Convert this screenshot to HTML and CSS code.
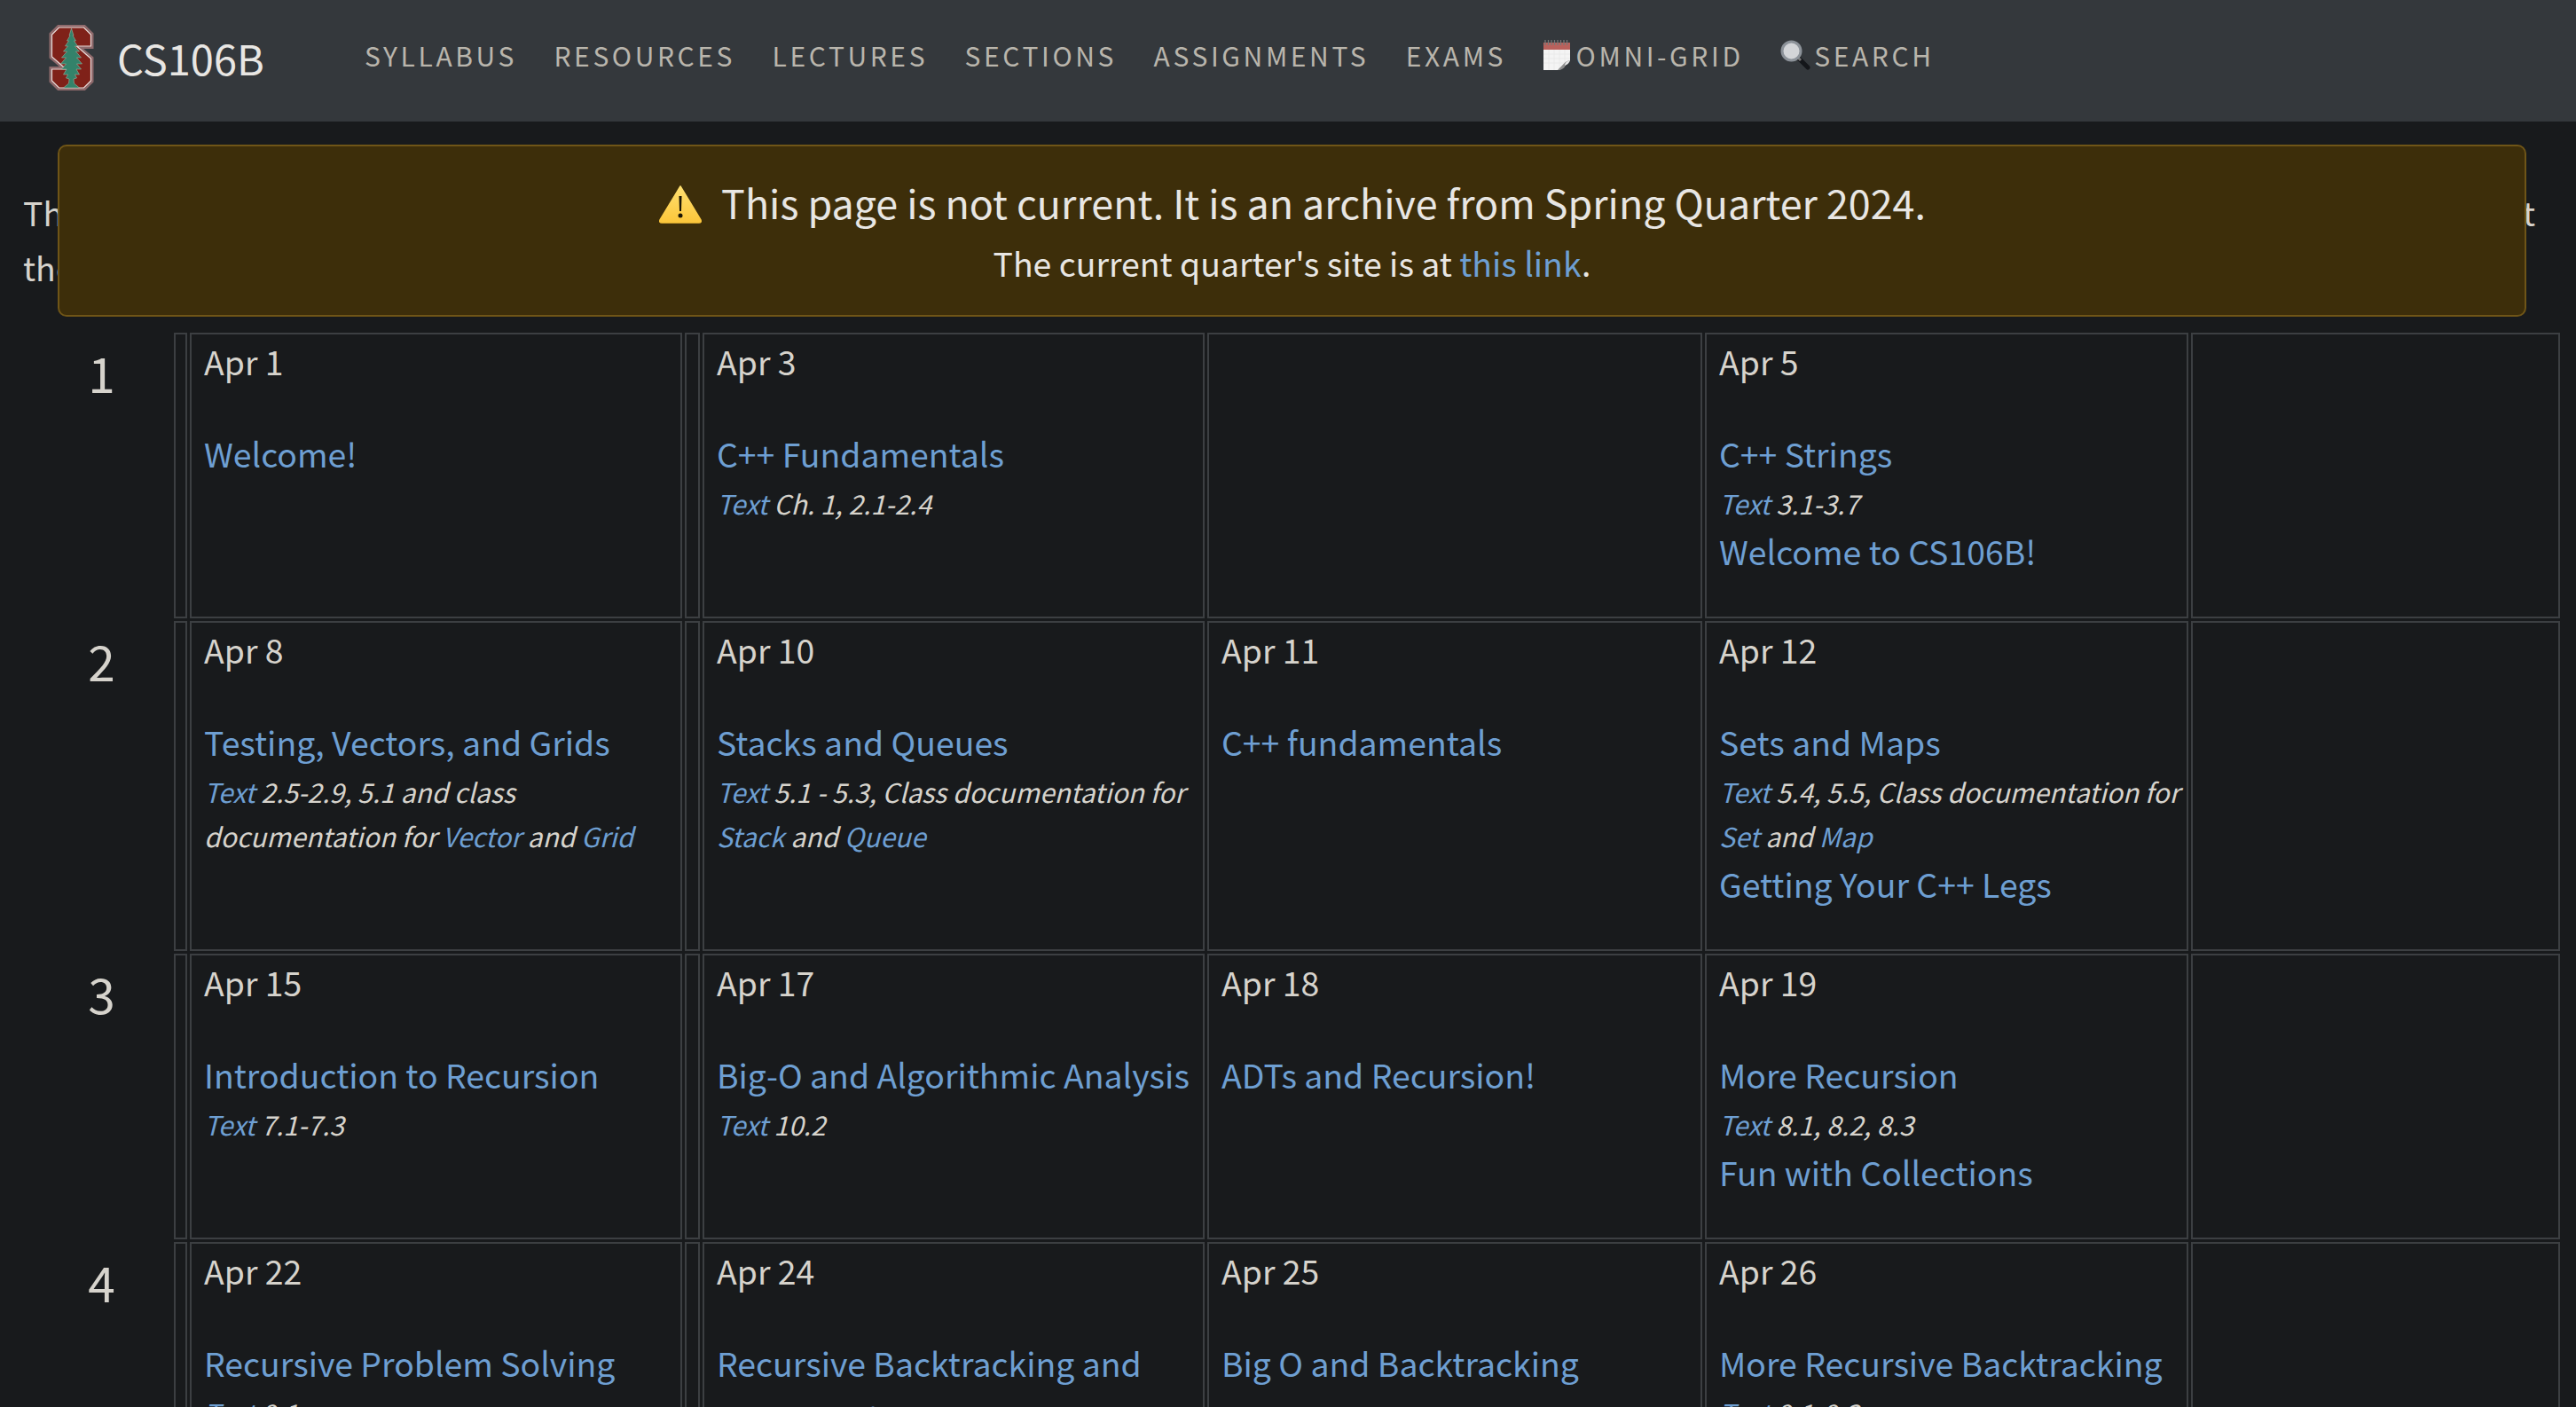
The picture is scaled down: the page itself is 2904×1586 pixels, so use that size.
FILE: index.html
```html
<!DOCTYPE html>
<html lang="en">
<head>
<meta charset="utf-8">
<title>CS106B Schedule</title>
<link rel="stylesheet" href="styles.css">
</head>
<body>
<nav class="navbar">
  <a class="brand" href="#">
    <svg class="logo" viewBox="0 0 50 74" aria-hidden="true">
      <path d="M10 1H40L49 10V26H36L49 37V64L40 73H10L1 64V48H14L1 37V10Z" fill="#8b5a5c" stroke="#8e6a6c" stroke-width="2"/>
      <path d="M11 3H39L47 11V24H31L47 38V63L39 71H11L3 63V50H19L3 36V11Z" fill="#7f2119" stroke="#e9dedc" stroke-width="1.2"/>
      <path d="M25 4L27.500 12H26.500L30 18H28L32 24H29L34 30H30L36 37H31L37 44H31L36 50H30.500L34 56H29L31 60L27.500 61L28 66L34 71H16L22 66L22.500 61L19 60L21 56H16L19.500 50H14L19 44H13L19 37H14L20 30H16L21 24H18L22 18H20L23.500 12H22.500Z" fill="#33826a" stroke="#a9c2b3" stroke-width=".5"/>
    </svg>
    <span class="brand-name">CS106B</span>
  </a>
  <ul class="nav-list">
    <li><a href="#">Syllabus</a></li>
    <li><a href="#">Resources</a></li>
    <li><a href="#">Lectures</a></li>
    <li><a href="#">Sections</a></li>
    <li><a href="#">Assignments</a></li>
    <li><a href="#">Exams</a></li>
    <li><a href="#" class="with-icon">
      <svg class="nav-icon" viewBox="0 0 30 34" aria-hidden="true">
        <rect y="3" width="30" height="31" fill="#f4f4f4"/>
        <rect y="3" width="30" height="8" fill="#b9615c"/>
        <path d="M2 0V6M5.500 0V6M9 0V6M12.500 0V6M16 0V6M19.500 0V6M23 0V6M26.500 0V6" stroke="#777" stroke-width="1.300"/>
        <path d="M0 16H30M0 21H30M0 26H30M6 11V34M12 11V34M18 11V34M24 11V34" stroke="#e4e4e4" stroke-width=".6"/>
        <path d="M30 23L18 34H30Z" fill="#34383c"/>
        <path d="M30 23C24 24 22 28 16 34C20 34 24 32 25 28C27 27 29 25 30 23Z" fill="#8d8d8d"/>
        <path d="M30 23C26 24 24 26 24 29C27 28 29 26 30 23Z" fill="#e8e8e8"/>
      </svg>Omni-Grid</a></li>
    <li><a href="#" class="with-icon">
      <svg class="nav-icon nav-icon-search" viewBox="0 0 34 34" aria-hidden="true">
        <path d="M21 21L31 31" stroke="#14161a" stroke-width="5" stroke-linecap="round"/>
        <path d="M19 19L23 23" stroke="#777" stroke-width="3"/>
        <circle cx="12.500" cy="12.500" r="10.500" fill="#d3d5d8" stroke="#8c9299" stroke-width="3"/>
      </svg>Search</a></li>
  </ul>
</nav>

<main class="page">
  <div class="archive-alert">
    <p class="alert-title">
      <svg class="alert-icon" viewBox="0 0 50 44" aria-hidden="true">
        <defs><linearGradient id="warn" x1="0" y1="0" x2="0" y2="1"><stop offset="0" stop-color="#ffe070"/><stop offset="1" stop-color="#fcc63a"/></linearGradient></defs>
        <path d="M25 2L48 40Q49 43 46 43H4Q1 43 2 40Z" fill="url(#warn)" stroke="url(#warn)" stroke-linejoin="round" stroke-width="1.500"/>
        <path d="M23.500 13H26.500L26 30H24Z" fill="#1b1505"/>
        <circle cx="25" cy="35" r="2.500" fill="#1b1505"/>
      </svg>This page is not current. It is an archive from Spring Quarter 2024.</p>
    <p class="alert-sub">The current quarter's site is at <a href="#">this link</a>.</p>
  </div>

  <p class="intro"><span class="intro-line">This calendar gives the schedule for the quarter. Lecture topics and readings may shift a little as we go along, so check back often to see what to expect</span> the next week.</p>

  <table class="calendar">
    <colgroup>
      <col class="c-week"><col class="c-gap-a"><col class="c-mon"><col class="c-gap-b"><col class="c-wed"><col class="c-thu"><col class="c-fri"><col class="c-sat">
    </colgroup>
    <tbody>
      <tr>
        <th class="week">1</th><td></td>
        <td><div class="date">Apr 1</div><a class="topic" href="#">Welcome!</a></td><td></td>
        <td><div class="date">Apr 3</div><a class="topic" href="#">C++ Fundamentals</a><div class="reading"><a href="#">Text</a> Ch. 1, 2.1-2.4</div></td>
        <td></td>
        <td><div class="date">Apr 5</div><a class="topic" href="#">C++ Strings</a><div class="reading"><a href="#">Text</a> 3.1-3.7</div><a class="topic" href="#">Welcome to CS106B!</a></td>
        <td></td>
      </tr>
      <tr>
        <th class="week">2</th><td></td>
        <td><div class="date">Apr 8</div><a class="topic" href="#">Testing, Vectors, and Grids</a><div class="reading"><a href="#">Text</a> 2.5-2.9, 5.1 and class documentation for <a href="#">Vector</a> and <a href="#">Grid</a></div></td><td></td>
        <td><div class="date">Apr 10</div><a class="topic" href="#">Stacks and Queues</a><div class="reading"><a href="#">Text</a> 5.1 - 5.3, Class documentation for <a href="#">Stack</a> and <a href="#">Queue</a></div></td>
        <td><div class="date">Apr 11</div><a class="topic" href="#">C++ fundamentals</a></td>
        <td><div class="date">Apr 12</div><a class="topic" href="#">Sets and Maps</a><div class="reading"><a href="#">Text</a> 5.4, 5.5, Class documentation for <a href="#">Set</a> and <a href="#">Map</a></div><a class="topic" href="#">Getting Your C++ Legs</a></td>
        <td></td>
      </tr>
      <tr>
        <th class="week">3</th><td></td>
        <td><div class="date">Apr 15</div><a class="topic" href="#">Introduction to Recursion</a><div class="reading"><a href="#">Text</a> 7.1-7.3</div></td><td></td>
        <td><div class="date">Apr 17</div><a class="topic" href="#">Big-O and Algorithmic Analysis</a><div class="reading"><a href="#">Text</a> 10.2</div></td>
        <td><div class="date">Apr 18</div><a class="topic" href="#">ADTs and Recursion!</a></td>
        <td><div class="date">Apr 19</div><a class="topic" href="#">More Recursion</a><div class="reading"><a href="#">Text</a> 8.1, 8.2, 8.3</div><a class="topic" href="#">Fun with Collections</a></td>
        <td></td>
      </tr>
      <tr>
        <th class="week">4</th><td></td>
        <td><div class="date">Apr 22</div><a class="topic" href="#">Recursive Problem Solving</a><div class="reading"><a href="#">Text</a> 9.1</div></td><td></td>
        <td><div class="date">Apr 24</div><a class="topic" href="#">Recursive Backtracking and Enumeration</a></td>
        <td><div class="date">Apr 25</div><a class="topic" href="#">Big O and Backtracking</a></td>
        <td><div class="date">Apr 26</div><a class="topic" href="#">More Recursive Backtracking</a><div class="reading"><a href="#">Text</a> 9.1-9.3</div></td>
        <td></td>
      </tr>
    </tbody>
  </table>
</main>
</body>
</html>
```

FILE: styles.css
```css
* { box-sizing: border-box; }

html, body {
  margin: 0;
  height: 1586px;
  overflow: hidden;
}

body {
  background: #181a1c;
  color: #d6d3cc;
  font-family: "Noto Sans CJK SC", "Source Sans Pro", "Noto Sans", sans-serif;
  font-size: 37.400px;
  line-height: 62px;
}

a { color: #6e9fd2; text-decoration: none; }

/* Navbar */
.navbar {
  display: flex;
  align-items: center;
  height: 137px;
  padding: 0 0 7px 55px;
  background: #34383c;
}

.brand {
  display: flex;
  align-items: center;
  width: 356px;
  color: #e8e6e3;
}

.logo { width: 51px; height: 74px; flex: none; }

.brand-name {
  margin-left: 26px;
  font-size: 47px;
  line-height: 60px;
}

.nav-list {
  display: flex;
  gap: 41.500px;
  margin: 0;
  padding: 0 0 6px;
  list-style: none;
}

.nav-list a {
  display: flex;
  align-items: center;
  color: #b9b5ac;
  font-size: 30px;
  line-height: 40px;
  letter-spacing: 3.600px;
  text-transform: uppercase;
}

.nav-icon { width: 30px; height: 34px; margin-right: 7px; flex: none; }
.nav-icon-search { width: 34px; margin-right: 4px; }

/* Archive notice */
.page { position: relative; padding: 71px 0 0 26px; }

.archive-alert {
  position: absolute;
  top: 26px;
  left: 65px;
  width: 2783px;
  height: 194px;
  background: #3d2e0a;
  border: 2px solid #6f5517;
  border-radius: 10px;
  color: #e8e6e3;
  text-align: center;
}

.alert-title {
  margin: 26px 0 0;
  font-size: 44.800px;
  line-height: 74px;
}

.alert-icon {
  width: 50px;
  height: 44px;
  margin-right: 21px;
  vertical-align: -5px;
}

.alert-sub {
  margin: 0;
  font-size: 37.400px;
  line-height: 62px;
}

/* Intro paragraph, mostly covered by the notice */
.intro { margin: 0 46px 43px 0; }
.intro-line { display: block; text-align: justify; text-align-last: justify; }

/* Calendar */
.calendar {
  table-layout: fixed;
  width: 2866px;
  margin-left: -3px;
  border-collapse: separate;
  border-spacing: 3px;
  margin-top: -3px;
}

.c-week { width: 167px; }
.c-gap-a { width: 15px; }
.c-mon { width: 555px; }
.c-gap-b { width: 17px; }
.c-wed { width: 566px; }
.c-thu { width: 558px; }
.c-fri { width: 545px; }
.c-sat { width: 416px; }

.calendar td {
  border: 2px solid #3c3f42;
  padding: 7px 0 46px 14px;
  vertical-align: top;
}

.week {
  padding: 9px 0 0 10px;
  vertical-align: top;
  font-size: 55px;
  line-height: 70px;
  font-weight: 400;
}

.date {
  font-size: 37.400px;
  line-height: 46px;
  margin-bottom: 53px;
}

.topic {
  display: block;
  margin: -3px 0;
  font-size: 37.400px;
  line-height: 62px;
}

.reading {
  margin: 3px 0 1px;
  font-size: 30px;
  line-height: 50px;
  font-style: italic;
}
```
